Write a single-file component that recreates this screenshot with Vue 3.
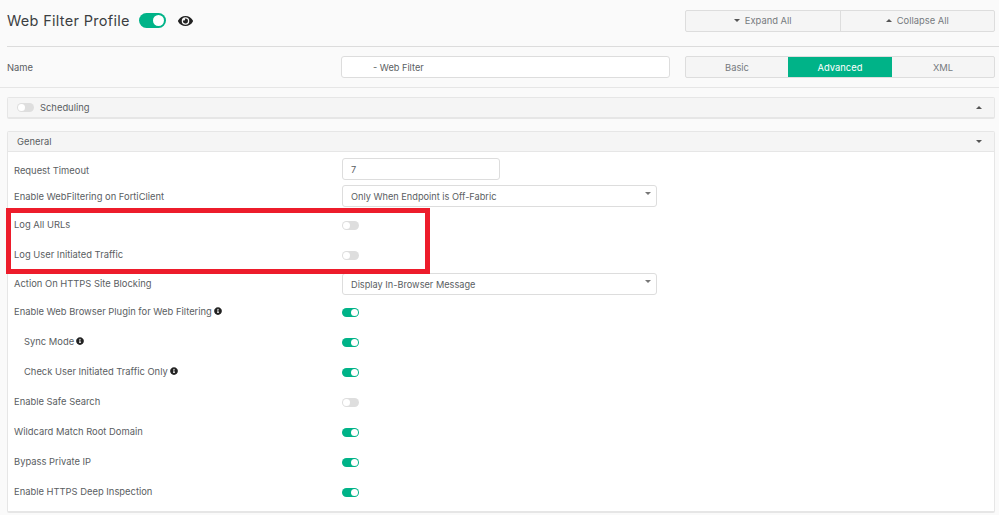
<script setup>
const rows = [
  { label: 'Request Timeout', kind: 'input', value: '7', h: 30 },
  { label: 'Enable WebFiltering on FortiClient', kind: 'select', value: 'Only When Endpoint is Off-Fabric', h: 26, nudge: 'up' },
  { label: 'Log All URLs', kind: 'toggle', on: false, h: 31 },
  { label: 'Log User Initiated Traffic', kind: 'toggle', on: false, h: 28 },
  { label: 'Action On HTTPS Site Blocking', kind: 'select', value: 'Display In-Browser Message', h: 28, nudge: 'low' },
  { label: 'Enable Web Browser Plugin for Web Filtering', kind: 'toggle', on: true, info: true, h: 30 },
  { label: 'Sync Mode', kind: 'toggle', on: true, info: true, sub: true, h: 30 },
  { label: 'Check User Initiated Traffic Only', kind: 'toggle', on: true, info: true, sub: true, h: 30 },
  { label: 'Enable Safe Search', kind: 'toggle', on: false, h: 30 },
  { label: 'Wildcard Match Root Domain', kind: 'toggle', on: true, h: 30 },
  { label: 'Bypass Private IP', kind: 'toggle', on: true, h: 30 },
  { label: 'Enable HTTPS Deep Inspection', kind: 'toggle', on: true, h: 30 }
]
const eye = 'M572.52 241.4C518.29 135.59 410.93 64 288 64S57.68 135.64 3.48 241.41a32.35 32.35 0 0 0 0 29.19C57.71 376.41 165.07 448 288 448s230.32-71.64 284.52-177.41a32.35 32.35 0 0 0 0-29.19zM288 400a144 144 0 1 1 144-144 143.93 143.93 0 0 1-144 144zm0-240a95.31 95.31 0 0 0-25.31 3.79 47.85 47.85 0 0 1-66.9 66.9A95.78 95.78 0 1 0 288 160z'
const info = 'M256 8C119.043 8 8 119.083 8 256c0 136.997 111.043 248 248 248s248-111.003 248-248C504 119.083 392.957 8 256 8zm0 110c23.196 0 42 18.804 42 42s-18.804 42-42 42-42-18.804-42-42 18.804-42 42-42zm56 254c0 6.627-5.373 12-12 12h-88c-6.627 0-12-5.373-12-12v-24c0-6.627 5.373-12 12-12h12v-64h-12c-6.627 0-12-5.373-12-12v-24c0-6.627 5.373-12 12-12h64c6.627 0 12 5.373 12 12v100h12c6.627 0 12 5.373 12 12v24z'
</script>

<template>
  <div class="page">
    <header class="head">
      <h1 class="title">Web Filter Profile</h1>
      <span class="toggle big on"><i></i></span>
      <svg class="eye" viewBox="0 0 576 512"><path :d="eye" /></svg>
      <div class="group expand">
        <div class="seg"><b class="tri down"></b>Expand All</div>
        <div class="seg"><b class="tri up"></b>Collapse All</div>
      </div>
    </header>
    <section class="name-row">
      <label class="name-label">Name</label>
      <div class="field name-field">- Web Filter</div>
      <div class="group mode">
        <div class="seg">Basic</div>
        <div class="seg active">Advanced</div>
        <div class="seg">XML</div>
      </div>
    </section>
    <section class="panel sched">
      <div class="panel-head">
        <span class="toggle off"><i></i></span>
        <span class="sched-text">Scheduling</span>
        <b class="tri up end"></b>
      </div>
    </section>
    <section class="panel general">
      <div class="panel-head">
        <span class="general-text">General</span>
        <b class="tri down end"></b>
      </div>
      <div class="panel-body">
        <div v-for="r in rows" :key="r.label" class="row" :style="{ height: r.h + 'px' }">
          <div class="label" :class="[r.kind, r.nudge, { sub: r.sub }]">
            <span>{{ r.label }}</span>
            <svg v-if="r.info" class="info" viewBox="0 0 512 512"><path :d="info" /></svg>
          </div>
          <div class="control" :class="r.nudge">
            <div v-if="r.kind === 'input'" class="field small">{{ r.value }}</div>
            <div v-else-if="r.kind === 'select'" class="field select">{{ r.value }}<b class="tri down sel"></b></div>
            <span v-else class="toggle" :class="r.on ? 'on' : 'off'"><i></i></span>
          </div>
        </div>
      </div>
    </section>
    <div class="highlight"></div>
  </div>
</template>

<style>
html, body { margin: 0; background: #fafafa; }
</style>

<style scoped>
.page {
  position: relative;
  width: 999px;
  height: 515px;
  overflow: hidden;
  background: #fafafa;
  font-family: Inter, "Liberation Sans", sans-serif;
  font-size: 9.4px;
  color: #5a5e62;
}
.head {
  display: flex;
  align-items: center;
  height: 46px;
  margin-left: 7px;
  padding-right: 4px;
  border-bottom: 1px solid #dcdcdc;
}
.title {
  margin: 0 9px 5px 0;
  font-size: 14.5px;
  font-weight: 400;
  letter-spacing: .3px;
  color: #3c3f42;
}
.eye { width: 15px; height: 14px; margin: 0 0 5px 12px; fill: #222; }
.toggle {
  position: relative;
  display: inline-block;
  width: 17px;
  height: 9px;
  border-radius: 5px;
  flex: none;
}
.toggle i {
  position: absolute;
  top: 1px;
  width: 7px;
  height: 7px;
  border-radius: 50%;
  background: #fff;
}
.toggle.on { background: #00b388; }
.toggle.on i { right: 1px; }
.toggle.off { background: #dedede; }
.toggle.off i { left: 1px; }
.toggle.big { width: 27px; height: 15px; margin-bottom: 5px; border-radius: 8px; }
.toggle.big i { width: 11px; height: 11px; top: 2px; right: 2px; }
.group {
  display: flex;
  width: 310px;
  height: 22px;
  box-sizing: border-box;
  border: 1px solid #dddddd;
  border-radius: 2px;
  background: #f5f5f5;
  color: #767a7e;
}
.expand { margin-left: auto; margin-bottom: 5px; }
.seg {
  flex: 1;
  display: flex;
  align-items: center;
  justify-content: center;
  gap: 5px;
}
.expand .seg + .seg { border-left: 1px solid #dddddd; }
.mode .seg:nth-child(1) { flex: none; width: 102px; }
.mode .seg:nth-child(2) { flex: none; width: 104px; }
.active { background: #00b388; color: #fff; }
.tri { display: block; width: 0; height: 0; border-left: 3px solid transparent; border-right: 3px solid transparent; }
.tri.down { border-top: 3px solid #555; }
.tri.up { border-bottom: 3px solid #555; }
.name-row {
  display: flex;
  align-items: center;
  height: 40px;
  padding: 0 4px 0 7px;
  border-bottom: 1px solid #e6e6e6;
}
.name-label { width: 334px; padding-top: 1px; }
.field {
  box-sizing: border-box;
  height: 22px;
  display: flex;
  align-items: center;
  border: 1px solid #dddddd;
  border-radius: 3px;
  background: #fff;
  padding-left: 8px;
  font-size: 9.2px;
}
.name-field { width: 329px; margin-right: 15px; padding-left: 31px; }
.mode { width: 310px; }
.panel {
  margin: 0 4px 0 7px;
  border: 1px solid #e6e6e6;
  border-radius: 2px;
  background: #fff;
}
.sched { margin-top: 9px; border-bottom-width: 2px; }
.general { margin-top: 12px; border-bottom-width: 2px; }
.panel-head {
  display: flex;
  align-items: center;
  height: 19px;
  padding: 0 12px 0 9px;
  background: #f5f5f5;
}
.general .panel-head { border-bottom: 1px solid #e6e6e6; height: 19px; }
.sched-text { margin-left: 6px; }
.end { margin-left: auto; }
.panel-body { background: #fff; padding: 2px 0 4px; }
.row { display: flex; align-items: center; }
.label {
  display: flex;
  align-items: center;
  gap: 2px;
  width: 334px;
  padding-left: 6px;
  box-sizing: border-box;
  margin-bottom: 2px;
}
.label.input { margin-bottom: 0; margin-top: 2px; }
.label.select { margin-bottom: 0; }
.label.up { margin-bottom: 2px; }
.label.sub { padding-left: 16px; }
.info { width: 8px; height: 8px; fill: #222; margin-bottom: 1px; }
.control { display: flex; align-items: center; }
.control.up { margin-bottom: 2px; }
.control.low { margin-top: 2px; }
.small { width: 158px; }
.select.field { position: relative; width: 315px; }
.sel { position: absolute; right: 5px; top: 6px; }
.tri.sel { border-top-color: #777; }
.highlight {
  position: absolute;
  left: 6px;
  top: 208px;
  width: 424px;
  height: 66px;
  box-sizing: border-box;
  border: 5px solid #ed1c2b;
}
</style>
